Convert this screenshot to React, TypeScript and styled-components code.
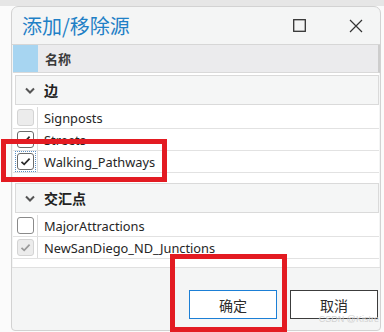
import styled, { createGlobalStyle } from "styled-components";

const GlobalStyle = createGlobalStyle`
  body {
    margin: 0;
    background: #fbfbfb;
    font-family: "Noto Sans", "Noto Sans CJK SC", sans-serif;
  }
`;

const Page = styled.div`
  position: relative;
  width: 384px;
  height: 332px;
  overflow: hidden;
`;

const TopStrip = styled.div`
  height: 6px;
  background: #e6e6e6;
`;

const Dialog = styled.div`
  margin-left: 11px;
  width: 370px;
  height: 325px;
  box-sizing: border-box;
  border: 1px solid #d2d2d2;
  border-radius: 7px 7px 4px 4px;
  background: #f4f5f5;
  display: flex;
  flex-direction: column;
  overflow: hidden;
`;

const TitleBar = styled.div`
  height: 37px;
  display: flex;
  align-items: center;
  padding: 0 17px 0 10px;
  border-bottom: 1px solid #d6d6d6;
`;

const Title = styled.div`
  font-family: "Noto Sans CJK SC", sans-serif;
  font-size: 20px;
  color: #1f80c6;
  margin-top: -1px;
`;

const Controls = styled.div`
  margin-left: auto;
  display: flex;
  align-items: center;
  gap: 43px;
`;

const Header = styled.div`
  height: 27px;
  display: flex;
  margin: 0 0 0 1px;
  background: #ebebed;
  border-bottom: 1px solid #d9d9d9;
  border-right: 2px solid #cdcdcd;
`;

const HeaderSelect = styled.div`
  width: 25px;
  background: #a7d5f1;
`;

const HeaderLabel = styled.div`
  padding-left: 7px;
  display: flex;
  align-items: center;
  font-family: "Noto Sans CJK SC", sans-serif;
  font-size: 13px;
  font-weight: 700;
  color: #3a3a3a;
`;

const List = styled.div`
  background: #fff;
  margin: 0 1px;
`;

const Section = styled.div`
  padding-bottom: 8px;
`;

const GroupHeader = styled.div`
  height: 28px;
  margin: 2px 0 2px 2px;
  border: 1px solid #dadada;
  background: #f5f6f6;
  display: flex;
  align-items: center;
  padding-left: 9px;
  gap: 9px;
  font-family: "Noto Sans CJK SC", sans-serif;
  font-size: 14px;
  font-weight: 700;
  color: #222;
`;

const Row = styled.div`
  height: 21px;
  display: flex;
  border-bottom: 1px solid #e2e2e2;
`;

const CheckCell = styled.div`
  width: 24px;
  border-right: 1px solid #dcdcdc;
  display: flex;
  align-items: center;
  justify-content: center;
`;

const Focus = styled.div<{ $focused?: boolean }>`
  padding: 1px;
  border: 1px ${(p) => (p.$focused ? "dotted #5b8fc4" : "solid transparent")};
  display: flex;
`;

const Box = styled.div<{ $disabled?: boolean; $checked?: boolean }>`
  width: 15px;
  height: 15px;
  border-radius: 3px;
  border: 1px solid
    ${(p) => (p.$disabled ? "#d4d4d4" : p.$checked ? "#6b6b6b" : "#8a8a8a")};
  background: ${(p) => (p.$disabled ? "#ececec" : "#fff")};
  display: flex;
  align-items: center;
  justify-content: center;
`;

const RowLabel = styled.div`
  padding: 1px 0 0 6px;
  display: flex;
  align-items: center;
  font-size: 12.8px;
  color: #262626;
`;

const Footer = styled.div`
  flex: 1;
  display: flex;
  align-items: flex-end;
  justify-content: flex-end;
  gap: 13px;
  padding: 0 2px 11px 0;
  border-top: 1px solid #e0e0e0;
`;

const Button = styled.button<{ $primary?: boolean }>`
  width: 88px;
  height: 29px;
  background: #fff;
  border: 1px solid ${(p) => (p.$primary ? "#1b7fd6" : "#3c3c3c")};
  font-family: "Noto Sans CJK SC", sans-serif;
  font-size: 14px;
  color: #2b2b2b;
  padding: 0;
`;

const Annotation = styled.div<{ $x: number; $y: number; $w: number; $h: number }>`
  position: absolute;
  left: ${(p) => p.$x}px;
  top: ${(p) => p.$y}px;
  width: ${(p) => p.$w}px;
  height: ${(p) => p.$h}px;
  box-sizing: border-box;
  border: 5px solid #e31b22;
  pointer-events: none;
`;

const Watermark = styled.div`
  position: absolute;
  right: 5px;
  bottom: 8px;
  font-family: "Liberation Sans", sans-serif;
  font-size: 9px;
  color: #d2d2d2;
`;

const Check = ({ color }: { color: string }) => (
  <svg width="11" height="11" viewBox="0 0 11 11">
    <polyline
      points="1.5,5.8 4.2,8.4 9.6,2.6"
      fill="none"
      stroke={color}
      strokeWidth="1.7"
    />
  </svg>
);

const Chevron = () => (
  <svg width="10" height="7" viewBox="0 0 10 7">
    <polyline points="1,1.5 5,5.5 9,1.5" fill="none" stroke="#555" strokeWidth="2" />
  </svg>
);

interface Item {
  name: string;
  checked: boolean;
  disabled?: boolean;
  focused?: boolean;
}

const groups: { title: string; items: Item[] }[] = [
  {
    title: "边",
    items: [
      { name: "Signposts", checked: false, disabled: true },
      { name: "Streets", checked: true },
      { name: "Walking_Pathways", checked: true, focused: true },
    ],
  },
  {
    title: "交汇点",
    items: [
      { name: "MajorAttractions", checked: false },
      { name: "NewSanDiego_ND_Junctions", checked: true, disabled: true },
    ],
  },
];

export default function App() {
  return (
    <Page>
      <GlobalStyle />
      <TopStrip />
      <Dialog>
        <TitleBar>
          <Title>添加/移除源</Title>
          <Controls>
            <svg width="13" height="13" viewBox="0 0 13 13">
              <rect x="0.7" y="0.7" width="11.6" height="11.6" fill="none" stroke="#333" strokeWidth="1.3" />
            </svg>
            <svg width="14" height="14" viewBox="0 0 14 14">
              <path d="M1 1 L13 13 M13 1 L1 13" stroke="#333" strokeWidth="1.2" />
            </svg>
          </Controls>
        </TitleBar>
        <Header>
          <HeaderSelect />
          <HeaderLabel>名称</HeaderLabel>
        </Header>
        <List>
          {groups.map((g) => (
            <Section key={g.title}>
              <GroupHeader>
                <Chevron />
                {g.title}
              </GroupHeader>
              {g.items.map((it) => (
                <Row key={it.name}>
                  <CheckCell>
                    <Focus $focused={it.focused}>
                      <Box $disabled={it.disabled} $checked={it.checked}>
                        {it.checked && <Check color={it.disabled ? "#9a9a9a" : "#2a2a2a"} />}
                      </Box>
                    </Focus>
                  </CheckCell>
                  <RowLabel>{it.name}</RowLabel>
                </Row>
              ))}
            </Section>
          ))}
        </List>
        <Footer>
          <Button $primary>确定</Button>
          <Button>取消</Button>
        </Footer>
      </Dialog>
      <Annotation $x={1} $y={139} $w={166} $h={43} />
      <Annotation $x={170} $y={254} $w={117} $h={78} />
      <Watermark>CSDN @Kistre</Watermark>
    </Page>
  );
}
